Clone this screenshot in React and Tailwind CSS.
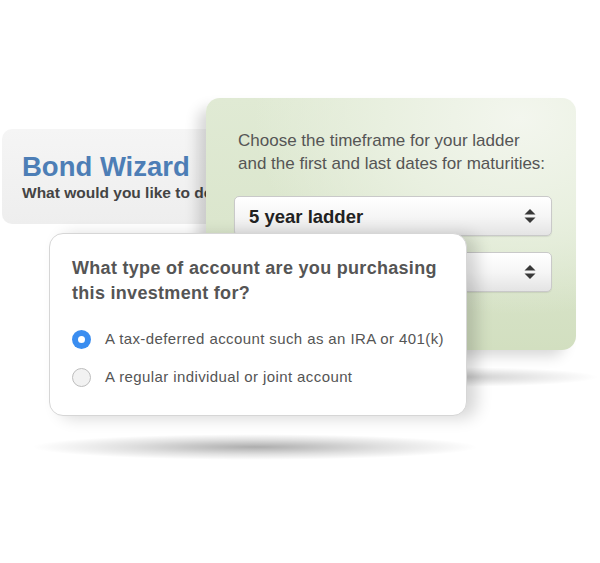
import React from "react";

function Arrows() {
  return (
    <svg width="14" height="18" viewBox="0 0 14 18" className="shrink-0">
      <path d="M7 2 L12.5 7.6 L1.5 7.6 Z" fill="#383838" />
      <path d="M7 16 L12.5 10.4 L1.5 10.4 Z" fill="#383838" />
    </svg>
  );
}

function Select({ label }) {
  return (
    <div className="flex h-[40px] w-[318px] items-center justify-between rounded-[5px] border border-[#c9c9c9] bg-[linear-gradient(to_bottom,#ffffff_0%,#f6f6f6_50%,#e4e4e4_100%)] pl-[14px] pr-[14px] shadow-[0_1px_1px_rgba(0,0,0,0.08)]">
      <span className="pt-[2px] text-[18.5px] font-bold text-[#222]">{label}</span>
      <Arrows />
    </div>
  );
}

function Radio({ checked, label }) {
  return (
    <div className="flex h-[22px] items-center gap-[14px]">
      {checked ? (
        <span className="flex h-[19px] w-[19px] items-center justify-center rounded-full bg-[#3a8df0]">
          <span className="h-[7px] w-[7px] rounded-full bg-white" />
        </span>
      ) : (
        <span className="h-[19px] w-[19px] rounded-full border border-[#bdbdbd] bg-[#f2f2f2]" />
      )}
      <span className="text-[15px] tracking-[0.4px] text-[#555]">{label}</span>
    </div>
  );
}

export default function App() {
  return (
    <div
      className="relative h-[563px] w-[600px] overflow-hidden bg-white"
      style={{ fontFamily: '"Liberation Sans", Arial, sans-serif' }}
    >
      {/* Bond Wizard card */}
      <div className="absolute left-[2px] top-[129px] flex h-[95px] w-[240px] flex-col justify-center rounded-[10px] bg-[linear-gradient(to_bottom,#f5f5f5,#eeeeee)] pl-[20px]">
        <div className="text-[27.5px] font-bold leading-[32px] text-[#4d7eb6]">Bond Wizard</div>
        <div className="whitespace-nowrap text-[15.5px] font-bold leading-[19px] text-[#444]">
          What would you like to do?
        </div>
      </div>

      {/* floor shadow of green card */}
      <div className="absolute left-[310px] top-[367px] h-[20px] w-[290px] bg-[radial-gradient(ellipse_at_center,rgba(0,0,0,0.2)_0%,rgba(0,0,0,0.07)_45%,rgba(0,0,0,0)_70%)]" />

      {/* Green card */}
      <div className="absolute left-[206px] top-[98px] flex h-[252px] w-[370px] flex-col rounded-[14px] bg-[radial-gradient(ellipse_at_85%_8%,#f3f6ee_0%,#e9f0e0_30%,rgba(233,240,224,0)_60%),linear-gradient(to_bottom,#e0eAd4_0%,#dbe6cd_50%,#d2dfc0_100%)] pl-[28px] pt-[31px] shadow-[-10px_8px_14px_-2px_rgba(0,0,0,0.16)]">
        <p className="ml-[4px] text-[17px] leading-[23px] text-[#555]">
          Choose the timeframe for your ladder
          <br />
          and the first and last dates for maturities:
        </p>
        <div className="mt-[21px] flex flex-col gap-[16px]">
          <Select label="5 year ladder" />
          <Select label="" />
        </div>
      </div>

      {/* White question card */}
      <div className="absolute left-[49px] top-[233px] flex h-[183px] w-[418px] flex-col rounded-[14px] border border-[#d6d6d6] bg-white pl-[22px] pt-[22px] shadow-[10px_2px_16px_rgba(0,0,0,0.16)]">
        <h2 className="text-[18px] font-bold leading-[25px] tracking-[0.3px] text-[#555]">
          What type of account are you purchasing
          <br />
          this investment for?
        </h2>
        <div className="mt-[22px] flex flex-col gap-[16px]">
          <Radio checked label="A tax-deferred account such as an IRA or 401(k)" />
          <Radio label="A regular individual or joint account" />
        </div>
      </div>

      {/* floor shadow of white card */}
      <div className="absolute left-[30px] top-[434px] h-[26px] w-[450px] bg-[radial-gradient(ellipse_at_center,rgba(0,0,0,0.32)_0%,rgba(0,0,0,0.12)_40%,rgba(0,0,0,0)_70%)]" />
    </div>
  );
}
